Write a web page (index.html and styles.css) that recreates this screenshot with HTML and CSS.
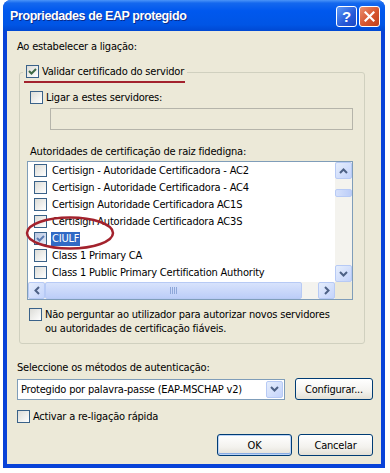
FILE: index.html
```html
<!DOCTYPE html>
<html lang="pt">
  <head>
    <meta charset="UTF-8" />
    <meta name="viewport" content="width=device-width, initial-scale=1.0" />
    <title>Propriedades de EAP protegido</title>
    <link rel="stylesheet" href="styles.css">
  </head>
  <body>
    <div class="window">
      <!-- title bar -->
      <div class="titlebar">
        <span class="title">Propriedades de EAP protegido</span>
        <div class="caption-buttons">
          <span class="cap help">?</span>
          <span class="cap close">
            <svg width="11" height="11" viewBox="0 0 11 11"><path d="M1.5 1.5 L9.5 9.5 M9.5 1.5 L1.5 9.5" stroke="#fff" stroke-width="2.2" stroke-linecap="square" /></svg>
          </span>
        </div>
      </div>

      <div class="client">
        <div class="label">Ao estabelecer a ligação:</div>

        <fieldset class="group">
          <legend class="legend">
            <span class="check"><svg width="11" height="11" viewBox="0 0 11 11"><path d="M2 5 L4.5 7.5 L9 3" fill="none" stroke="#3f6a45" stroke-width="2" /></svg></span>Validar certificado do servidor
          </legend>

          <div class="row servers-row"><span class="check"></span>Ligar a estes servidores:</div>
          <div class="textbox"></div>

          <div class="label ca-label">Autoridades de certificação de raiz fidedigna:</div>
          <div class="listbox">
            <div class="list-main">
              <ul class="items">
                <li><span class="check"></span><span class="item-text">Certisign - Autoridade Certificadora - AC2</span></li>
                <li><span class="check"></span><span class="item-text">Certisign - Autoridade Certificadora - AC4</span></li>
                <li><span class="check"></span><span class="item-text">Certisign Autoridade Certificadora AC1S</span></li>
                <li><span class="check"></span><span class="item-text">Certisign Autoridade Certificadora AC3S</span></li>
                <li><span class="check selected-check"><svg width="11" height="11" viewBox="0 0 11 11"><path d="M2 5 L4.5 7.5 L9 3" fill="none" stroke="#5b7bb2" stroke-width="2" /></svg></span><span class="item-text selected">CIULF</span></li>
                <li><span class="check"></span><span class="item-text">Class 1 Primary CA</span></li>
                <li><span class="check"></span><span class="item-text">Class 1 Public Primary Certification Authority</span></li>
              </ul>
              <div class="vscroll">
                <span class="sbtn"><svg width="9" height="6" viewBox="0 0 9 6"><path d="M1 5 L4.5 1.5 L8 5" fill="none" stroke="#4d6185" stroke-width="2" /></svg></span>
                <div class="vtrack"><span class="vthumb"></span></div>
                <span class="sbtn"><svg width="9" height="6" viewBox="0 0 9 6"><path d="M1 1 L4.5 4.5 L8 1" fill="none" stroke="#4d6185" stroke-width="2" /></svg></span>
              </div>
            </div>
            <div class="hscroll">
              <span class="sbtn"><svg width="6" height="9" viewBox="0 0 6 9"><path d="M5 1 L1.5 4.5 L5 8" fill="none" stroke="#4d6185" stroke-width="2" /></svg></span>
              <div class="htrack"><span class="hthumb"><span class="grip"></span></span></div>
              <span class="sbtn"><svg width="6" height="9" viewBox="0 0 6 9"><path d="M1 1 L4.5 4.5 L1 8" fill="none" stroke="#4d6185" stroke-width="2" /></svg></span>
              <span class="corner"></span>
            </div>
          </div>

          <div class="row ask-row">
            <span class="check"></span>
            <span>Não perguntar ao utilizador para autorizar novos servidores<br>ou autoridades de certificação fiáveis.</span>
          </div>
        </fieldset>

        <div class="label method-label">Seleccione os métodos de autenticação:</div>
        <div class="method-row">
          <div class="combo">
            <span class="combo-text">Protegido por palavra-passe (EAP-MSCHAP v2)</span>
            <span class="sbtn combo-btn"><svg width="9" height="6" viewBox="0 0 9 6"><path d="M1 1 L4.5 4.5 L8 1" fill="none" stroke="#4d6185" stroke-width="2" /></svg></span>
          </div>
          <button class="xpbutton config">Configurar...</button>
        </div>

        <div class="row fast-row"><span class="check"></span>Activar a re-ligação rápida</div>

        <div class="actions">
          <button class="xpbutton default">OK</button>
          <button class="xpbutton">Cancelar</button>
        </div>
      </div>
    </div>

    <!-- red annotations drawn over the screenshot -->
    <svg class="marks" width="390" height="473" viewBox="0 0 390 473">
      <line x1="24" y1="82" x2="185" y2="82" stroke="#a3222d" stroke-width="2" />
      <ellipse cx="70" cy="233" rx="43" ry="15.5" fill="none" stroke="#a3222d" stroke-width="2.5" />
    </svg>
  </body>
</html>
```

FILE: styles.css
```css
body {
  margin: 0;
  background: #fff;
  font-family: "DejaVu Sans Condensed", "DejaVu Sans", sans-serif;
  font-size: 11px;
  letter-spacing: -0.2px;
  color: #000;
}

.window {
  position: relative;
  margin-left: 3px;
  width: 382px;
  height: 468px;
  background: #0842d8;
  border-radius: 8px 8px 0 0;
  display: flex;
  flex-direction: column;
}

/* title bar */
.titlebar {
  height: 31px;
  display: flex;
  align-items: center;
  justify-content: space-between;
  padding: 0 5px 0 7px;
  border-radius: 8px 8px 0 0;
  background: linear-gradient(to bottom, #4b95f8 0%, #1468ee 10%, #0058ee 35%, #0055e5 80%, #0048d2 100%);
}

.title {
  color: #fff;
  font-family: "Liberation Sans", sans-serif;
  font-weight: bold;
  font-size: 12.5px;
  letter-spacing: -0.4px;
  text-shadow: 1px 1px 0 #0a2a8a;
  margin-top: 1px;
}

.caption-buttons {
  display: flex;
  gap: 2px;
  margin-top: 2px;
}

.cap {
  width: 21px;
  height: 21px;
  box-sizing: border-box;
  border: 1px solid #fff;
  border-radius: 3px;
  display: flex;
  align-items: center;
  justify-content: center;
  color: #fff;
}

.help {
  background: linear-gradient(135deg, #5f9bf8, #2659d8 60%, #1b48c4);
  font-family: "Liberation Sans", sans-serif;
  font-weight: bold;
  font-size: 15px;
}

.close {
  background: linear-gradient(135deg, #eb8f6f, #d6552f 55%, #c0401c);
}

/* dialog body */
.client {
  flex: 1;
  margin: 0 4px 4px;
  padding: 9px 8px 0 10px;
  background: #ece9d8;
}

.label {
  line-height: 14px;
}

.row {
  display: flex;
  align-items: flex-start;
  line-height: 14px;
}

.check {
  width: 13px;
  height: 13px;
  box-sizing: border-box;
  border: 1px solid #3a6289;
  background: linear-gradient(135deg, #dcdcd7, #fff);
  display: inline-flex;
  align-items: center;
  justify-content: center;
  flex: none;
  margin-right: 3px;
  vertical-align: top;
}

.group {
  margin: 11px 8px 0 2px;
  padding: 12px 11px 7px 7px;
  border: 1px solid #d0d0bf;
  border-radius: 3px;
}

.legend {
  padding: 0 3px;
  margin-left: -4px;
  line-height: 14px;
}

.servers-row {
  margin-left: 3px;
}

.textbox {
  margin: 3px 0 0 23px;
  height: 22px;
  box-sizing: border-box;
  border: 1px solid #b5b4aa;
  background: #ece9d8;
}

.ca-label {
  margin: 15px 0 0 3px;
}

/* certificate list */
.listbox {
  margin-top: 2px;
  height: 139px;
  box-sizing: border-box;
  border: 1px solid #7f9db9;
  background: #fff;
  display: flex;
  flex-direction: column;
}

.list-main {
  flex: 1;
  display: flex;
}

.items {
  flex: 1;
  margin: 0;
  padding: 0;
  list-style: none;
}

.items li {
  height: 17px;
  display: flex;
  align-items: center;
  padding-left: 6px;
  white-space: nowrap;
}

.items .check {
  margin-right: 4px;
}

.item-text {
  padding: 0 1px;
  line-height: 14px;
}

.selected {
  background: #316ac5;
  color: #fff;
}

.selected-check {
  background: linear-gradient(135deg, #b9c6e0, #e4eaf6);
}

.sbtn {
  width: 17px;
  height: 17px;
  box-sizing: border-box;
  border: 1px solid #b7caf5;
  border-radius: 2px;
  background: linear-gradient(135deg, #e6eefc, #c3d3fb);
  display: flex;
  align-items: center;
  justify-content: center;
  flex: none;
}

.vscroll {
  width: 17px;
  display: flex;
  flex-direction: column;
  background: #f4f3ee;
}

.vtrack {
  flex: 1;
  padding-top: 10px;
}

.vthumb {
  display: block;
  height: 8px;
  box-sizing: border-box;
  border: 1px solid #b7caf5;
  border-radius: 2px;
  background: linear-gradient(to right, #d6e1fb, #bccdf8);
}

.hscroll {
  height: 17px;
  display: flex;
  background: #f4f3ee;
}

.htrack {
  flex: 1;
  display: flex;
  padding-right: 16px;
}

.hthumb {
  flex: 1;
  box-sizing: border-box;
  border: 1px solid #b7caf5;
  border-radius: 2px;
  background: linear-gradient(to bottom, #d8e3fc, #bccdf8);
  display: flex;
  align-items: center;
  justify-content: center;
}

.grip {
  width: 8px;
  height: 7px;
  background: repeating-linear-gradient(to right, #8ea7d8 0 1px, transparent 1px 2px);
}

.corner {
  width: 17px;
  background: #ece9d8;
}

.ask-row {
  margin: 8px 0 0 2px;
}

/* authentication method */
.method-label {
  margin-top: 17px;
}

.method-row {
  margin-top: 3px;
  display: flex;
  align-items: center;
  gap: 10px;
}

.combo {
  width: 268px;
  height: 21px;
  box-sizing: border-box;
  border: 1px solid #7f9db9;
  background: #fff;
  display: flex;
  align-items: center;
  justify-content: space-between;
  padding: 0 1px 0 3px;
}

.xpbutton {
  height: 22px;
  box-sizing: border-box;
  border: 1px solid #003c74;
  border-radius: 3px;
  background: linear-gradient(to bottom, #fff 0%, #f3f2ee 60%, #e3e0d6 100%);
  font-family: inherit;
  font-size: 11px;
  letter-spacing: -0.2px;
  padding: 0;
  color: #000;
}

.config {
  width: 78px;
}

.fast-row {
  margin-top: 10px;
}

.actions {
  margin-top: 10px;
  display: flex;
  justify-content: flex-end;
  gap: 6px;
}

.actions .xpbutton {
  width: 75px;
  height: 22px;
}

.default {
  box-shadow: inset 0 0 0 1px #bcd4f6, inset 0 -1px 0 1px #89ade4;
}

.marks {
  position: absolute;
  left: 0;
  top: 0;
  pointer-events: none;
}
```
